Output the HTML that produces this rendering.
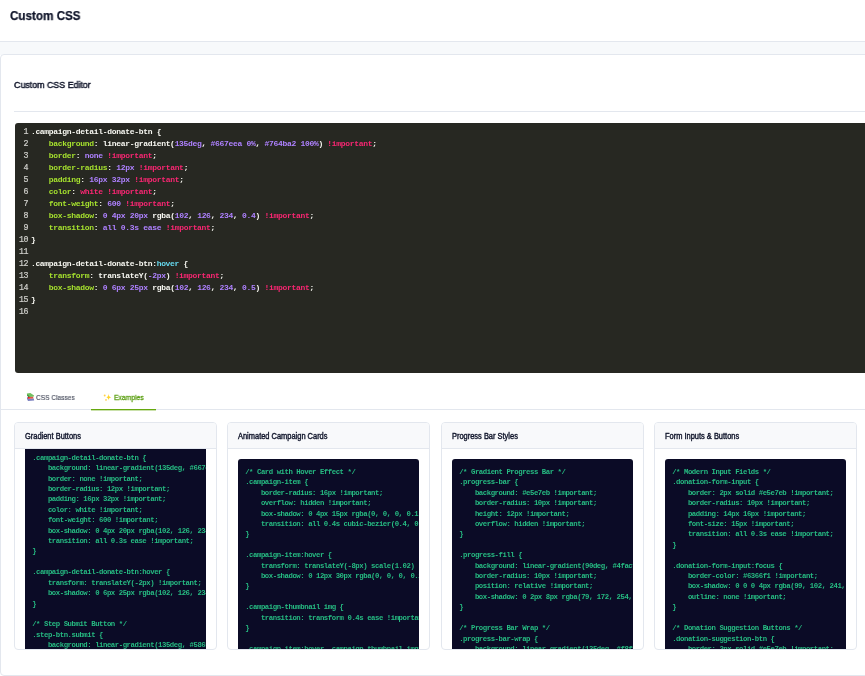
<!DOCTYPE html><html><head><meta charset="utf-8"><style>
*{margin:0;padding:0;box-sizing:border-box}
html,body{width:865px;height:676px;overflow:hidden;background:#fff;font-family:"Liberation Sans",sans-serif;position:relative;-webkit-font-smoothing:antialiased}
body>*{will-change:transform}
.title{position:absolute;left:10.2px;top:6.7px;font-size:12.6px;font-weight:700;color:#0f1429;-webkit-text-stroke:0.25px #0f1429;line-height:18px;white-space:nowrap;transform:scaleX(0.925);transform-origin:0 0}
.hline{position:absolute;left:0;top:41px;width:865px;height:1px;background:#e3e7ee}
.strip{position:absolute;left:0;top:42px;width:865px;height:13px;background:#f7f9fb}
.outer{position:absolute;left:0;top:54px;width:900px;height:622px;background:#fff;border:1px solid #e3e7ee;border-radius:4px}
.edtitle{position:absolute;left:13.9px;top:77.7px;font-size:9.2px;color:#0f1429;line-height:14px;white-space:nowrap;-webkit-text-stroke:0.45px #0f1429;transform:scaleX(0.963);transform-origin:0 0}
.sep{position:absolute;left:14px;top:111px;width:870px;height:1px;background:#e3e7ee}
.editor{position:absolute;left:15px;top:123px;width:900px;height:249.5px;background:#272822;border-radius:3px;overflow:hidden}
.gutter{position:absolute;left:0;top:3px;width:13px;text-align:right;color:#d0d0cc;font-family:"Liberation Mono",monospace;font-size:8.3px;line-height:12px;letter-spacing:-0.52px;-webkit-text-stroke:0.2px #d0d0cc}
.code{position:absolute;left:15.9px;top:3px;color:#f8f8f2;font-family:"Liberation Mono",monospace;font-size:8px;font-weight:700;line-height:12px;letter-spacing:-0.31px;white-space:pre}
.p{color:#a6e22e}.v{color:#ae81ff}.i{color:#f92672}.c{color:#66d9ef}
.tabline{position:absolute;left:1px;top:409px;width:870px;height:1px;background:#e3e7ee}
.tabul{position:absolute;left:91px;top:409px;width:65px;height:1px;background:#66a80f;box-shadow:0 1px 0 rgba(102,168,15,0.35)}
.tab1{position:absolute;left:35.8px;top:391.5px;font-size:7.5px;color:#4b5060;line-height:12px;white-space:nowrap;-webkit-text-stroke:0.15px #4b5060;transform:scaleX(0.875);transform-origin:0 0}
.tab2{position:absolute;left:113.5px;top:391.5px;font-size:7.5px;color:#5da015;line-height:12px;white-space:nowrap;-webkit-text-stroke:0.3px #5da015;transform:scaleX(0.9);transform-origin:0 0}
.books{position:absolute;left:24px;top:390px}
.spark{position:absolute;left:101px;top:390px}
.card{position:absolute;top:422px;width:202.7px;height:228px;border:1px solid #e3e7ee;border-radius:4px;background:#fff;overflow:hidden}
.ch{height:26px;background:#f8f9fb;border-bottom:1px solid #e3e7ee;font-size:8.4px;color:#10152b;padding-left:9.7px;line-height:26px;white-space:nowrap;-webkit-text-stroke:0.4px #10152b;transform-origin:0 0}
.cb{position:absolute;left:0;top:26px;right:0;bottom:0;overflow:hidden}
.box{position:absolute;left:9.7px;width:181px;height:400px;background:#0b0b26;border-radius:3px;overflow:hidden}
.box pre{position:absolute;left:7.5px;top:8px;font-family:"Liberation Mono",monospace;font-size:7.3px;font-weight:700;line-height:10.41px;letter-spacing:-0.445px;color:#26bb82;white-space:pre}
.ch span{display:inline-block;transform:scaleX(0.89);transform-origin:0 50%;position:relative;top:-0.5px}

</style></head><body>
<div class="title">Custom CSS</div><div class="hline"></div><div class="strip"></div>
<div class="outer"></div>
<div class="edtitle">Custom CSS Editor</div><div class="sep"></div>
<div class="editor"><div class="gutter"><div>1</div><div>2</div><div>3</div><div>4</div><div>5</div><div>6</div><div>7</div><div>8</div><div>9</div><div>10</div><div>11</div><div>12</div><div>13</div><div>14</div><div>15</div><div>16</div></div><div class="code"><div>.campaign-detail-donate-btn {</div><div>    <span class="p">background</span>: linear-gradient(<span class="v">135deg</span>, <span class="v">#667eea</span> <span class="v">0%</span>, <span class="v">#764ba2</span> <span class="v">100%</span>) <span class="i">!important</span>;</div><div>    <span class="p">border</span>: <span class="v">none</span> <span class="i">!important</span>;</div><div>    <span class="p">border-radius</span>: <span class="v">12px</span> <span class="i">!important</span>;</div><div>    <span class="p">padding</span>: <span class="v">16px</span> <span class="v">32px</span> <span class="i">!important</span>;</div><div>    <span class="p">color</span>: <span class="i">white</span> <span class="i">!important</span>;</div><div>    <span class="p">font-weight</span>: <span class="v">600</span> <span class="i">!important</span>;</div><div>    <span class="p">box-shadow</span>: <span class="v">0</span> <span class="v">4px</span> <span class="v">20px</span> rgba(<span class="v">102</span>, <span class="v">126</span>, <span class="v">234</span>, <span class="v">0.4</span>) <span class="i">!important</span>;</div><div>    <span class="p">transition</span>: <span class="v">all</span> <span class="v">0.3s</span> <span class="v">ease</span> <span class="i">!important</span>;</div><div>}</div><div>&#8203;</div><div>.campaign-detail-donate-btn:<span class="c">hover</span> {</div><div>    <span class="p">transform</span>: translateY(<span class="v">-2px</span>) <span class="i">!important</span>;</div><div>    <span class="p">box-shadow</span>: <span class="v">0</span> <span class="v">6px</span> <span class="v">25px</span> rgba(<span class="v">102</span>, <span class="v">126</span>, <span class="v">234</span>, <span class="v">0.5</span>) <span class="i">!important</span>;</div><div>}</div><div>&#8203;</div></div></div>
<div class="tabline"></div><div class="tabul"></div>
<div class="tab1">CSS Classes</div><div class="tab2">Examples</div>
<svg class="books" width="12" height="13" viewBox="0 0 12 13"><path d="M3.2 6.2 L3 8.8 L3.8 10.6 L4 8 Z" fill="#6a6db8"/><path d="M3.6 8.6 L9.8 8.4 L10.2 10.6 L3.9 10.9 Z" fill="#7a80bf"/><path d="M3.8 6.6 L9.2 6.5 L9.3 8.6 L3.9 8.7 Z" fill="#e2564a"/><path d="M4 6.8 L5.5 6.9 L5.4 8.4 L4.1 8.2 Z" fill="#ec1c1c"/><path d="M2.9 3.6 L6.3 2.9 L10.1 5.6 L9.8 6.6 L5.6 6.9 L3 5.6 Z" fill="#72c061"/><path d="M3.6 4.4 L5.8 6.9 L4.6 6.9 L3.1 5.4 Z" fill="#2f8a2c"/></svg>
<svg class="spark" width="12" height="13" viewBox="0 0 12 13"><path d="M7.5 3.6 Q7.65 7.35 10.3 7.5 Q7.65 7.65 7.5 10.6 Q7.35 7.65 5.3 7.5 Q7.35 7.35 7.5 3.6Z" fill="#ffd52a"/><circle cx="3.7" cy="5.5" r="0.95" fill="#ffd24a"/><rect x="4.1" y="9" width="1.8" height="1.8" rx="0.5" fill="#ffd76a"/></svg>
<div class="card" style="left:14px"><div class="ch"><span>Gradient Buttons</span></div><div class="cb"><div class="box" style="top:-14.600000000000001px"><pre>/* Premium Donate Button - Gradient */
.campaign-detail-donate-btn {
    background: linear-gradient(135deg, #667eea 0%, #764ba2 100%) !important;
    border: none !important;
    border-radius: 12px !important;
    padding: 16px 32px !important;
    color: white !important;
    font-weight: 600 !important;
    box-shadow: 0 4px 20px rgba(102, 126, 234, 0.4) !important;
    transition: all 0.3s ease !important;
}

.campaign-detail-donate-btn:hover {
    transform: translateY(-2px) !important;
    box-shadow: 0 6px 25px rgba(102, 126, 234, 0.5) !important;
}

/* Step Submit Button */
.step-btn.submit {
    background: linear-gradient(135deg, #5865f2 0%, #4752c4 100%) !important;
    border: none !important;</pre></div></div></div>
<div class="card" style="left:227.33px"><div class="ch"><span>Animated Campaign Cards</span></div><div class="cb"><div class="box" style="top:10px"><pre>/* Card with Hover Effect */
.campaign-item {
    border-radius: 16px !important;
    overflow: hidden !important;
    box-shadow: 0 4px 15px rgba(0, 0, 0, 0.1) !important;
    transition: all 0.4s cubic-bezier(0.4, 0, 0.2, 1) !important;
}

.campaign-item:hover {
    transform: translateY(-8px) scale(1.02) !important;
    box-shadow: 0 12px 30px rgba(0, 0, 0, 0.2) !important;
}

.campaign-thumbnail img {
    transition: transform 0.4s ease !important;
}

.campaign-item:hover .campaign-thumbnail img {
    transform: scale(1.1) !important;
}</pre></div></div></div>
<div class="card" style="left:440.67px"><div class="ch"><span>Progress Bar Styles</span></div><div class="cb"><div class="box" style="top:10px"><pre>/* Gradient Progress Bar */
.progress-bar {
    background: #e5e7eb !important;
    border-radius: 10px !important;
    height: 12px !important;
    overflow: hidden !important;
}

.progress-fill {
    background: linear-gradient(90deg, #4facfe 0%, #00f2fe 100%) !important;
    border-radius: 10px !important;
    position: relative !important;
    box-shadow: 0 2px 8px rgba(79, 172, 254, 0.4) !important;
}

/* Progress Bar Wrap */
.progress-bar-wrap {
    background: linear-gradient(135deg, #f8f9fa 0%, #e9ecef 100%) !important;
    border-radius: 12px !important;</pre></div></div></div>
<div class="card" style="left:654px"><div class="ch"><span>Form Inputs &amp; Buttons</span></div><div class="cb"><div class="box" style="top:10px"><pre>/* Modern Input Fields */
.donation-form-input {
    border: 2px solid #e5e7eb !important;
    border-radius: 10px !important;
    padding: 14px 16px !important;
    font-size: 15px !important;
    transition: all 0.3s ease !important;
}

.donation-form-input:focus {
    border-color: #6366f1 !important;
    box-shadow: 0 0 0 4px rgba(99, 102, 241, 0.1) !important;
    outline: none !important;
}

/* Donation Suggestion Buttons */
.donation-suggestion-btn {
    border: 2px solid #e5e7eb !important;
    border-radius: 10px !important;</pre></div></div></div>
</body></html>
